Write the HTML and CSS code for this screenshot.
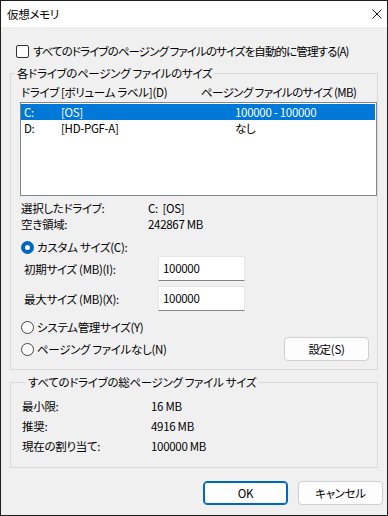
FILE: index.html
```html
<!DOCTYPE html>
<html>
<head>
  <meta charset="utf-8">
  <meta name="viewport" content="width=device-width">
  <title>仮想メモリ</title>
<link rel="stylesheet" href="styles.css">
</head>
<body>
  <div class="dialog">
    <div class="titlebar">
      <span class="title">仮想メモリ</span>
      <svg class="close" width="10" height="10" viewBox="0 0 10 10">
        <path d="M0.5 0.5 L9.5 9.5 M9.5 0.5 L0.5 9.5" stroke="#1a1a1a" stroke-width="1" fill="none"/>
      </svg>
    </div>

    <div class="content">
      <div class="check-row">
        <span class="checkbox"></span>
        <span class="tight">すべてのドライブのページング ファイルのサイズを自動的に管理する(A)</span>
      </div>

      <fieldset class="group group-drives">
        <legend>各ドライブのページング ファイルのサイズ</legend>
        <div class="list-head">
          <span class="col-letter">ドライブ</span>
          <span class="col-label">[ボリューム ラベル](D)</span>
          <span class="snug">ページング ファイルのサイズ (MB)</span>
        </div>
        <div class="listbox">
          <div class="list-row selected">
            <span class="cell-letter">C:</span>
            <span class="cell-label">[OS]</span>
            <span>100000 - 100000</span>
          </div>
          <div class="list-row">
            <span class="cell-letter">D:</span>
            <span class="cell-label">[HD-PGF-A]</span>
            <span>なし</span>
          </div>
        </div>

        <div class="info">
          <div class="info-row"><span class="info-key">選択したドライブ:</span><span>C:&nbsp;&nbsp;[OS]</span></div>
          <div class="info-row"><span class="info-key">空き領域:</span><span>242867 MB</span></div>
        </div>

        <div class="radio-row custom">
          <span class="radio checked"></span>
          <span>カスタム サイズ(C):</span>
        </div>
        <div class="size-row first">
          <span class="size-label">初期サイズ (MB)(I):</span>
          <span class="textbox">100000</span>
        </div>
        <div class="size-row">
          <span class="size-label">最大サイズ (MB)(X):</span>
          <span class="textbox">100000</span>
        </div>

        <div class="radio-row system">
          <span class="radio"></span>
          <span>システム管理サイズ(Y)</span>
        </div>
        <div class="radio-row none">
          <span class="radio"></span>
          <span>ページング ファイルなし(N)</span>
          <button class="btn btn-set">設定(S)</button>
        </div>
      </fieldset>

      <fieldset class="group group-total">
        <legend>すべてのドライブの総ページング ファイル サイズ</legend>
        <div class="total-row"><span class="total-key">最小限:</span><span>16 MB</span></div>
        <div class="total-row"><span class="total-key">推奨:</span><span>4916 MB</span></div>
        <div class="total-row"><span class="total-key">現在の割り当て:</span><span>100000 MB</span></div>
      </fieldset>

      <div class="actions">
        <button class="btn btn-default">OK</button>
        <button class="btn">キャンセル</button>
      </div>
    </div>
  </div>
</body>
</html>
```

FILE: styles.css
```css
:root {
  --face: #f0f0f0;
  --group-line: #d9d9d9;
  --accent: #0067c0;
  --select: #0078d7;
}

* {
  box-sizing: border-box;
}

body {
  margin: 0;
  font-family: "Noto Sans CJK JP", "Noto Sans", sans-serif;
  font-size: 11.5px;
  line-height: 16px;
  letter-spacing: -0.3px;
  font-feature-settings: "palt";
  white-space: nowrap;
  color: #000;
}

.tight {
  letter-spacing: -0.9px;
}

.snug {
  letter-spacing: -0.6px;
}

.dialog {
  width: 388px;
  height: 516px;
  border: 1px solid #1f1f1f;
  background: var(--face);
  display: flex;
  flex-direction: column;
}

.titlebar {
  height: 26px;
  background: #fff;
  display: flex;
  align-items: center;
  padding-left: 6px;
  padding-right: 5px;
}

.title {
  flex: 1;
}

.close {
  margin-top: -1px;
}

.content {
  padding: 16px 0 0 9px;
  flex: 1;
}

.check-row {
  display: flex;
  align-items: center;
  height: 16px;
  margin-left: 6px;
}

.checkbox {
  flex: none;
  width: 13px;
  height: 13px;
  border: 1px solid #333;
  border-radius: 2px;
  background: #fff;
  margin-right: 4px;
}

/* group boxes */
.group {
  width: 368px;
  margin: 6px 0 0 0;
  padding: 0;
  border: 1px solid var(--group-line);
  border-radius: 0;
}

.group legend {
  margin-left: 4px;
  padding: 0 2px;
}

.list-head {
  display: flex;
  margin: 3px 0 0 10px;
}

.col-letter {
  width: 40px;
}

.col-label {
  width: 140px;
}

.listbox {
  width: 357px;
  height: 94px;
  margin: 2px 0 0 9px;
  border: 1px solid #828790;
  background: #fff;
  padding: 1px 1px 0 0;
}

.list-row {
  display: flex;
  height: 16px;
  padding-left: 3px;
}

.list-row.selected {
  background: var(--select);
  color: #fff;
}

.cell-letter {
  width: 37px;
}

.cell-label {
  width: 174px;
}

.info {
  margin: 4px 0 0 10px;
}

.info-row {
  display: flex;
}

.info-key {
  width: 127px;
}

.radio-row {
  display: flex;
  align-items: center;
  height: 16px;
  margin-left: 10px;
}

.radio {
  flex: none;
  width: 13px;
  height: 13px;
  border-radius: 50%;
  border: 1px solid #444;
  background: #fff;
  margin-right: 3px;
}

.radio.checked {
  border: 4px solid var(--accent);
  background: #fff;
}

.radio-row.custom {
  margin-top: 7px;
}

.radio-row.system {
  margin-top: 8px;
}

.radio-row.none {
  height: 24px;
  margin-top: 2px;
  margin-right: 8px;
}

.size-row {
  display: flex;
  align-items: center;
  margin: 5px 0 0 13px;
}

.size-row.first {
  margin-top: 1px;
}

.size-label {
  width: 134px;
}

.textbox {
  width: 87px;
  height: 25px;
  background: #fff;
  border: 1px solid #e6e6e6;
  border-bottom-color: #858585;
  padding: 3px 0 0 4px;
}

.btn {
  font: inherit;
  letter-spacing: inherit;
  font-feature-settings: "palt";
  width: 85px;
  height: 24px;
  padding: 0;
  background: #fdfdfd;
  border: 1px solid #d0d0d0;
  border-radius: 4px;
  color: #000;
}

.btn-set {
  margin-left: auto;
}

.group-drives {
  padding-bottom: 8px;
}

.group-total {
  margin-top: 4px;
  padding: 6px 0 11px 11px;
}

.total-row {
  display: flex;
  height: 20px;
  align-items: center;
}

.total-key {
  width: 129px;
}

.actions {
  display: flex;
  justify-content: flex-end;
  gap: 10px;
  margin-top: 13px;
  padding-right: 4px;
}

.btn-default {
  border: 1px solid var(--accent);
  box-shadow: inset 0 0 0 1px var(--accent);
}
```
